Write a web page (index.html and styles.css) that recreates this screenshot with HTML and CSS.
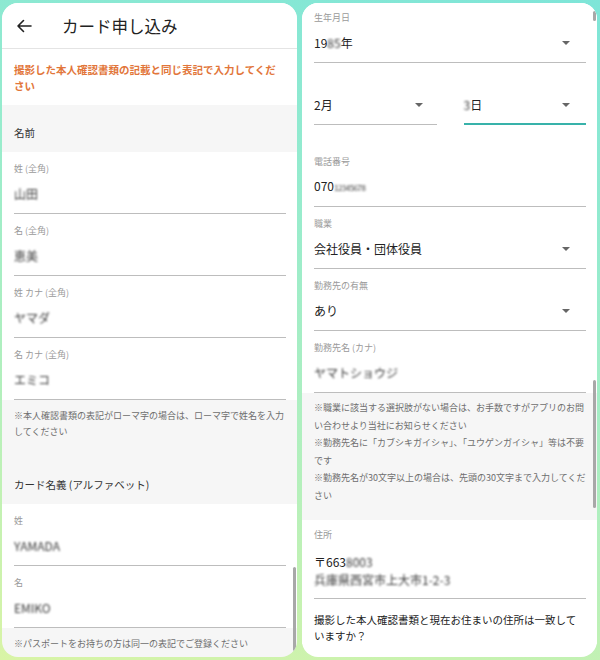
FILE: index.html
```html
<!DOCTYPE html>
<html lang="ja">
<head>
<meta charset="utf-8">
<title>カード申し込み</title>
<link rel="stylesheet" href="styles.css">
</head>
<body>
<div class="stage">
  <section class="panel">
    <header class="appbar">
      <svg class="back" width="16" height="14" viewBox="0 0 16 14"><path d="M15 7H2M7.5 1.5L2 7l5.5 5.5" fill="none" stroke="#222" stroke-width="1.6" stroke-linecap="round" stroke-linejoin="round"/></svg>
      <h1 class="title">カード申し込み</h1>
    </header>
    <p class="notice">撮影した本人確認書類の記載と同じ表記で入力してください</p>
    <h2 class="section">名前</h2>
    <div class="field"><div class="label">姓 (全角)</div><div class="value"><span class="blur">山田</span></div></div>
    <div class="field"><div class="label">名 (全角)</div><div class="value"><span class="blur">恵美</span></div></div>
    <div class="field"><div class="label">姓 カナ (全角)</div><div class="value"><span class="blur">ヤマダ</span></div></div>
    <div class="field"><div class="label">名 カナ (全角)</div><div class="value"><span class="blur">エミコ</span></div></div>
    <p class="note">※本人確認書類の表記がローマ字の場合は、ローマ字で姓名を入力してください</p>
    <h2 class="section">カード名義 (アルファベット)</h2>
    <div class="field"><div class="label">姓</div><div class="value"><span class="blur">YAMADA</span></div></div>
    <div class="field"><div class="label">名</div><div class="value"><span class="blur">EMIKO</span></div></div>
    <p class="note note-tight">※パスポートをお持ちの方は同一の表記でご登録ください</p>
    <div class="scroll scroll-left"></div>
  </section>

  <section class="panel">
    <div class="field field-first select"><div class="label">生年月日</div><div class="value"><span>19<span class="blur">85</span>年</span><i class="caret"></i></div></div>
    <div class="date-row">
      <div class="field nolabel select"><div class="value"><span>2月</span><i class="caret"></i></div></div>
      <div class="field nolabel select active"><div class="value"><span><span class="blur">3</span>日</span><i class="caret"></i></div></div>
    </div>
    <div class="field spaced"><div class="label">電話番号</div><div class="value"><span>070<span class="blur thin">12345678</span></span></div></div>
    <div class="field select"><div class="label">職業</div><div class="value"><span>会社役員・団体役員</span><i class="caret"></i></div></div>
    <div class="field select"><div class="label">勤務先の有無</div><div class="value"><span>あり</span><i class="caret"></i></div></div>
    <div class="field"><div class="label">勤務先名 (カナ)</div><div class="value"><span class="blur">ヤマトショウジ</span></div></div>
    <div class="note note-right">
      <p>※職業に該当する選択肢がない場合は、お手数ですがアプリのお問い合わせより当社にお知らせください</p>
      <p>※勤務先名に「カブシキガイシャ」、「ユウゲンガイシャ」等は不要です</p>
      <p>※勤務先名が30文字以上の場合は、先頭の30文字まで入力してください</p>
    </div>
    <div class="field address"><div class="label">住所</div><div class="value multi"><span>〒663<span class="blur">8003</span></span><span class="blur">兵庫県西宮市上大市1-2-3</span></div></div>
    <p class="question">撮影した本人確認書類と現在お住まいの住所は一致していますか？</p>
    <div class="scroll scroll-top"></div>
    <div class="scroll scroll-right"></div>
  </section>
</div>
</body>
</html>
```

FILE: styles.css
```css
* { box-sizing: border-box; }
html, body { margin: 0; padding: 0; }
body {
  width: 600px;
  height: 660px;
  overflow: hidden;
  font-family: "Noto Sans CJK JP", "Noto Sans", sans-serif;
  background: linear-gradient(195deg, #7ee5d8 0%, #98eccd 35%, #b6f0bb 70%, #d9f4a6 100%);
}
.stage {
  display: flex;
  gap: 5px;
  padding: 3px 3px 3px 2px;
  height: 660px;
}
.panel {
  position: relative;
  flex: 0 0 295px;
  background: #f6f6f6;
  border-radius: 16px;
  overflow: hidden;
}
.panel + .panel { flex-basis: 295px; background: #fff; }

.appbar {
  display: flex;
  align-items: center;
  height: 46px;
  background: #fff;
  border-bottom: 1px solid #e4e4e4;
}
.back { margin-left: 14px; }
.title {
  margin: 0 0 0 30px;
  font-size: 16.5px;
  font-weight: 400;
  color: #222;
}
.notice {
  margin: 0;
  padding: 13px 12px 11px;
  background: #fff;
  color: #e2763a;
  font-size: 10.5px;
  line-height: 16px;
  font-weight: 700;
}
.section {
  margin: 0;
  padding: 20px 12px 11px;
  font-size: 10.5px;
  line-height: 16px;
  font-weight: 400;
  color: #333;
}
.field {
  background: #fff;
  padding: 10px 11px 0 12px;
}
.field .label {
  height: 14px;
  font-size: 9px;
  line-height: 14px;
  color: #9a9a9a;
}
.field .value {
  display: flex;
  align-items: center;
  justify-content: space-between;
  margin-top: 8px;
  height: 30px;
  padding-bottom: 9px;
  border-bottom: 1px solid #bdbdbd;
  font-size: 12px;
  line-height: 20px;
  color: #222;
}
.blur { display: inline-block; filter: blur(1px); color: #3a3a3a; }
.blur.thin { font-size: 8px; letter-spacing: -0.5px; }
.caret {
  width: 0;
  height: 0;
  margin-right: 16px;
  border-left: 4px solid transparent;
  border-right: 4px solid transparent;
  border-top: 4px solid #666;
}
.field-first { padding-top: 8px; }
.date-row {
  display: flex;
  gap: 27px;
  background: #fff;
  padding: 0 11px 0 12px;
}
.date-row .field { flex: 1; padding: 32px 0 0; }
.date-row .field .value { margin-top: 0; height: 30px; }
.date-row .field.active .value { border-bottom: 2px solid #38b2aa; height: 30px; padding-bottom: 8px; }
.date-row .field:first-child .caret { margin-right: 14px; }
.spaced { padding-top: 30px; }
.note {
  margin: 0;
  padding: 8px 12px 17px;
  font-size: 9px;
  line-height: 16px;
  color: #6e6e6e;
}
.note-tight { padding-top: 8px; }
.note-right {
  background: #f6f6f6;
  padding: 6px 11px 16px 12px;
  line-height: 17.5px;
}
.note-right p { margin: 0; }
.address { padding-top: 8px; }
.address .value.multi {
  display: flex;
  flex-direction: column;
  align-items: flex-start;
  justify-content: flex-start;
  margin-top: 11px;
  height: 46px;
  line-height: 18px;
}
.question {
  margin: 0;
  padding: 13px 12px 0;
  background: #fff;
  font-size: 10.5px;
  line-height: 16px;
  color: #222;
}
.scroll {
  position: absolute;
  right: 1px;
  width: 3px;
  border-radius: 2px;
  background: #a8a8a8;
}
.scroll-left { top: 564px; height: 84px; }
.scroll-top { top: 8px; height: 10px; }
.scroll-right { top: 377px; height: 128px; }
```
